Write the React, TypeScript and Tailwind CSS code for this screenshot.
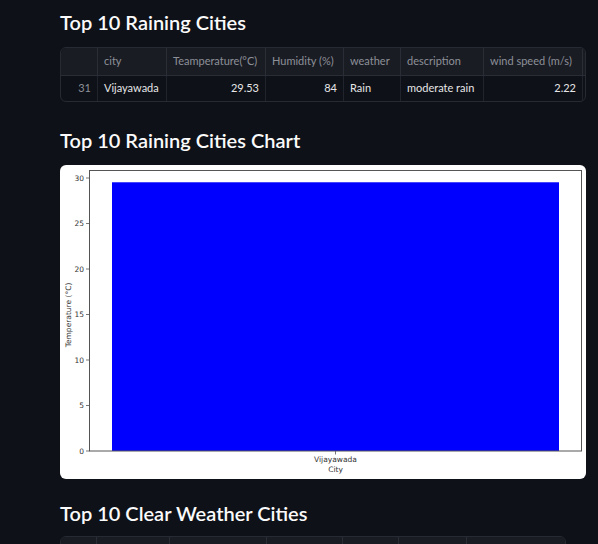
import React from "react";

const font = { fontFamily: 'Lato, "Noto Sans", sans-serif' };

function Table1() {
  const cols = [37, 69, 99, 78, 57, 83, 99];
  const headers = ["", "city", "Teamperature(°C)", "Humidity (%)", "weather", "description", "wind speed (m/s)"];
  const row = ["31", "Vijayawada", "29.53", "84", "Rain", "moderate rain", "2.22"];
  const right = [true, false, true, true, false, false, true];
  return (
    <div className="w-[526px] rounded-md border border-[#262a33] overflow-hidden text-[11px]">
      <div className="flex h-[28px] bg-[#1a1c23] border-b border-[#2a2d36]">
        {headers.map((h, i) => (
          <div
            key={i}
            style={{ width: cols[i] }}
            className="flex items-center px-[6px] text-[#8d9099] border-r border-[#2a2d36] shrink-0 whitespace-nowrap overflow-hidden"
          >
            {h}
          </div>
        ))}
      </div>
      <div className="flex h-[25px]">
        {row.map((c, i) => (
          <div
            key={i}
            style={{ width: cols[i] }}
            className={
              "flex items-center px-[6px] border-r border-[#21242c] shrink-0 whitespace-nowrap overflow-hidden " +
              (right[i] ? "justify-end " : "") +
              (i === 0 ? "text-[#8d9099]" : "text-[#e6e6e8]")
            }
          >
            {c}
          </div>
        ))}
      </div>
    </div>
  );
}

function Table2() {
  const cols = [36, 73, 97, 76, 56, 68, 99];
  return (
    <div className="w-[506px] rounded-md border border-[#262a33] overflow-hidden text-[11px]">
      <div className="flex h-[28px] bg-[#1a1c23]">
        {cols.map((w, i) => (
          <div key={i} style={{ width: w }} className="border-r border-[#2a2d36] shrink-0" />
        ))}
      </div>
    </div>
  );
}

function Chart() {
  const yFor = (v: number) => 286 - v * 9.1;
  const ticks = [0, 5, 10, 15, 20, 25, 30];
  return (
    <div className="w-[526px] h-[314px] bg-white rounded-md overflow-hidden">
      <svg width="526" height="314" viewBox="0 0 526 314" style={{ fontFamily: '"DejaVu Sans", sans-serif' }}>
        <rect x="52" y={yFor(29.53)} width="447" height={286 - yFor(29.53)} fill="#0000ff" />
        <rect x="29.5" y="5.5" width="492" height="280.5" fill="none" stroke="#555" strokeWidth="1" />
        {ticks.map((t) => (
          <g key={t}>
            <line x1="26" x2="29.5" y1={yFor(t)} y2={yFor(t)} stroke="#555" strokeWidth="0.8" />
            <text x="24" y={yFor(t) + 2.6} fontSize="7.5" textAnchor="end" fill="#333">
              {t}
            </text>
          </g>
        ))}
        <line x1="275.5" x2="275.5" y1="286" y2="289.5" stroke="#555" strokeWidth="0.8" />
        <text x="275.5" y="297" fontSize="7.5" textAnchor="middle" fill="#333">
          Vijayawada
        </text>
        <text x="275.5" y="307" fontSize="7.5" textAnchor="middle" fill="#333">
          City
        </text>
        <text
          x="0"
          y="0"
          fontSize="7.5"
          textAnchor="middle"
          fill="#333"
          transform="translate(10.5 150) rotate(-90)"
        >
          Temperature (°C)
        </text>
      </svg>
    </div>
  );
}

const h2 = "text-[20px] leading-[28px] font-semibold text-[#fafafa] whitespace-nowrap";

export default function App() {
  return (
    <div className="w-[598px] h-[544px] bg-[#0e1117] overflow-hidden" style={font}>
      <div className="pl-[60px] pt-[8px] flex flex-col">
        <h2 className={h2}>Top 10 Raining Cities</h2>
        <div className="mt-[11px]">
          <Table1 />
        </div>
        <h2 className={"mt-[24px] " + h2}>Top 10 Raining Cities Chart</h2>
        <div className="mt-[11px]">
          <Chart />
        </div>
        <h2 className={"mt-[20px] " + h2}>Top 10 Clear Weather Cities</h2>
        <div className="mt-[9px]">
          <Table2 />
        </div>
      </div>
    </div>
  );
}
